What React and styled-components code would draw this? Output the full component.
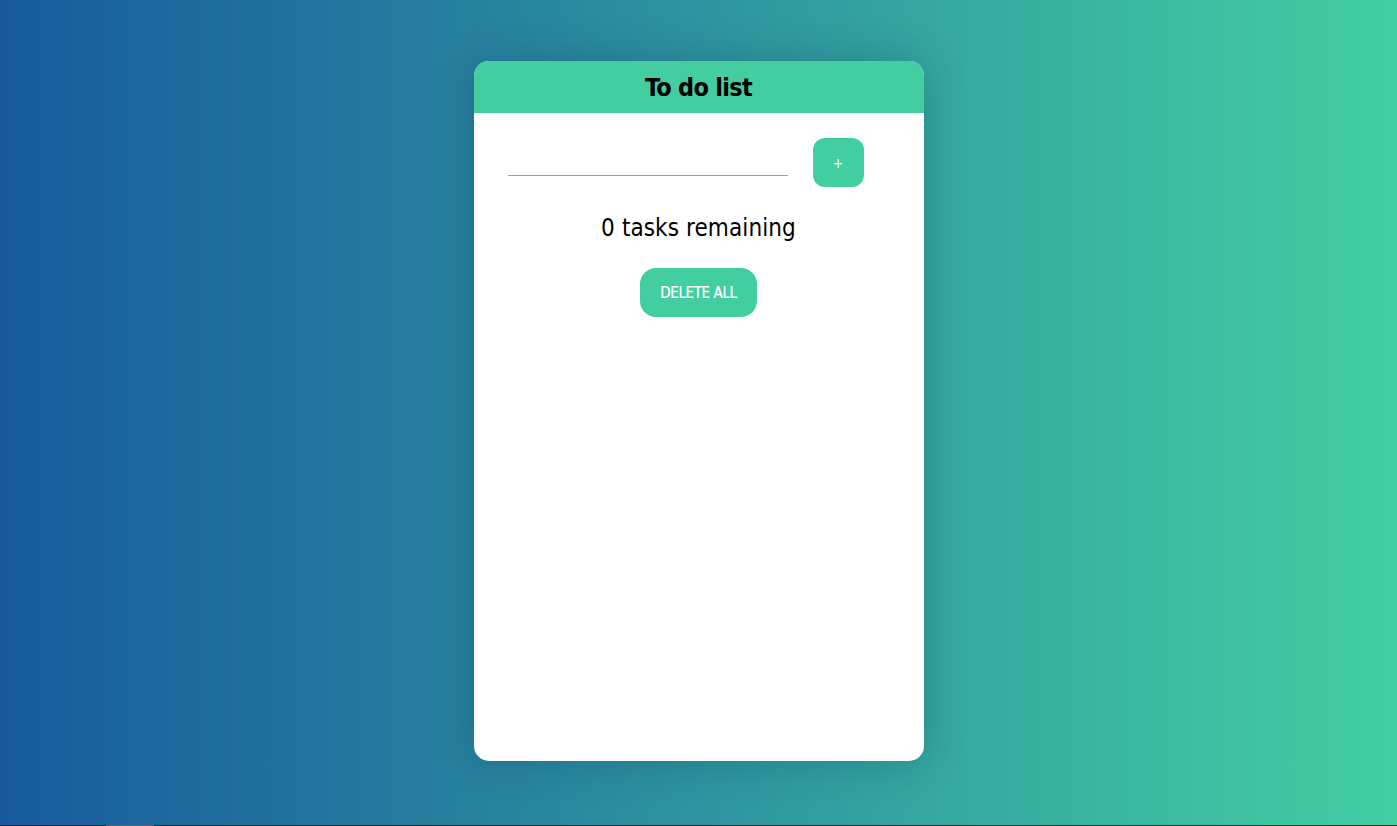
import React, { useState } from "react";
import styled, { createGlobalStyle } from "styled-components";

const Global = createGlobalStyle`
  html, body { margin: 0; padding: 0; }
  body {
    font-family: "DejaVu Sans Condensed", "Liberation Sans", sans-serif;
    background: #0f2a3c;
  }
  * { box-sizing: border-box; }
`;

const Page = styled.main`
  height: 825px;
  background: linear-gradient(to right, #185a9d, #43cea2);
  display: flex;
  justify-content: center;
  align-items: flex-start;
  padding-top: 61px;
`;

const BottomEdge = styled.div`
  height: 1px;
  background: #0f2a3c;
  display: flex;
  padding-left: 106px;
`;

const EdgeMark = styled.span`
  width: 48px;
  height: 1px;
  background: #a3434a;
`;

const Card = styled.section`
  width: 450px;
  height: 700px;
  background: #fff;
  border-radius: 15px;
  overflow: hidden;
  box-shadow: 0 0 40px rgba(10, 40, 70, 0.25);
  display: flex;
  flex-direction: column;
`;

const Header = styled.header`
  height: 52px;
  background: #43cea2;
  display: flex;
  align-items: center;
  justify-content: center;
`;

const Title = styled.h1`
  margin: 0;
  font-size: 25px;
  font-weight: 700;
  letter-spacing: -0.7px;
  color: #000;
`;

const Body = styled.div`
  display: flex;
  flex-direction: column;
  align-items: center;
  padding-top: 25px;
`;

const InputRow = styled.form`
  width: 100%;
  display: flex;
  align-items: flex-start;
  padding-left: 34px;
  gap: 25px;
`;

const TaskInput = styled.input`
  width: 280px;
  margin-top: 15px;
  height: 23px;
  border: none;
  border-bottom: 1px solid #43cea2;
  outline: none;
  font-family: inherit;
  font-size: 16px;
  padding: 0 2px;
`;

const Button = styled.button`
  border: none;
  background: #43cea2;
  color: #fff;
  font-family: inherit;
  height: 49px;
  cursor: pointer;
  display: flex;
  align-items: center;
  justify-content: center;
`;

const AddButton = styled(Button)`
  width: 51px;
  border-radius: 12px;
  font-size: 14px;
`;

const Remaining = styled.p`
  margin: 23px 0 0;
  font-size: 24px;
  letter-spacing: 0.1px;
  color: #000;
  line-height: 36px;
`;

const DeleteButton = styled(Button)`
  margin-top: 22px;
  width: 117px;
  border-radius: 16px;
  font-size: 15px;
  letter-spacing: -0.4px;
  text-transform: uppercase;
  -webkit-text-stroke: 0.2px #fff;
`;

export default function App() {
  const [text, setText] = useState("");
  const [tasks, setTasks] = useState([]);
  return (
    <>
      <Global />
      <Page>
        <Card>
          <Header>
            <Title>To do list</Title>
          </Header>
          <Body>
            <InputRow
              onSubmit={(e) => {
                e.preventDefault();
                if (text.trim()) {
                  setTasks([...tasks, text]);
                  setText("");
                }
              }}
            >
              <TaskInput value={text} onChange={(e) => setText(e.target.value)} />
              <AddButton type="submit">+</AddButton>
            </InputRow>
            <Remaining>{tasks.length} tasks remaining</Remaining>
            <DeleteButton type="button" onClick={() => setTasks([])}>
              Delete all
            </DeleteButton>
          </Body>
        </Card>
      </Page>
      <BottomEdge>
        <EdgeMark />
      </BottomEdge>
    </>
  );
}
